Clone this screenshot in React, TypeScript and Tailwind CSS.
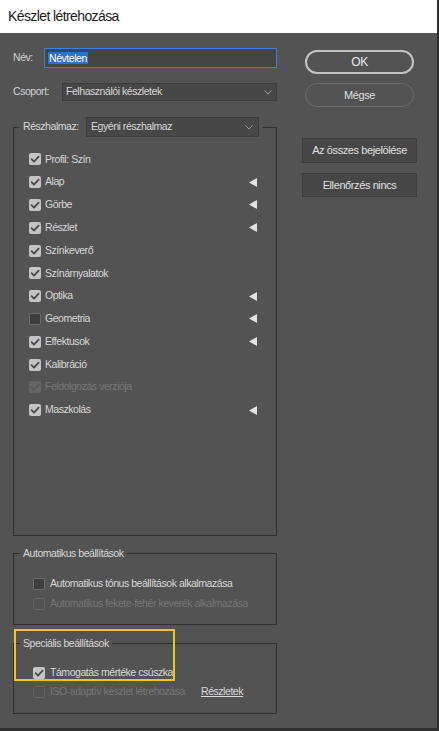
import React from "react";

type BoxProps = { checked?: boolean; disabled?: boolean };

function CheckBox({ checked, disabled }: BoxProps) {
  if (checked) {
    return (
      <span
        className={`flex h-[12px] w-[12px] shrink-0 items-center justify-center rounded-[2px] ${
          disabled ? "bg-[#666666]" : "bg-[#c4c4c4]"
        }`}
      >
        <svg viewBox="0 0 12 12" className="h-[12px] w-[12px]">
          <polyline
            points="2.6,6.2 5,8.6 9.6,3.6"
            fill="none"
            stroke={disabled ? "#585858" : "#4b4b4b"}
            strokeWidth="1.8"
            strokeLinecap="round"
            strokeLinejoin="round"
          />
        </svg>
      </span>
    );
  }
  return (
    <span
      className={`h-[12px] w-[12px] shrink-0 rounded-[2px] border ${
        disabled ? "border-[#646464] bg-transparent" : "border-[#6c6c6c] bg-[#3d3d3d]"
      }`}
    />
  );
}

function Arrow() {
  return (
    <svg viewBox="0 0 8 9" className="h-[9px] w-[8px]">
      <polygon points="8,0 8,9 0,4.5" fill="#e2e2e2" />
    </svg>
  );
}

function Chevron() {
  return (
    <svg viewBox="0 0 8 5" className="h-[5px] w-[8px]">
      <polyline points="0.5,0.5 4,4 7.5,0.5" fill="none" stroke="#9c9c9c" strokeWidth="1" />
    </svg>
  );
}

const subsetRows = [
  { label: "Profil: Szín", checked: true },
  { label: "Alap", checked: true, arrow: true },
  { label: "Görbe", checked: true, arrow: true },
  { label: "Részlet", checked: true, arrow: true },
  { label: "Színkeverő", checked: true },
  { label: "Színárnyalatok", checked: true },
  { label: "Optika", checked: true, arrow: true },
  { label: "Geometria", checked: false, arrow: true },
  { label: "Effektusok", checked: true, arrow: true },
  { label: "Kalibráció", checked: true },
  { label: "Feldolgozás verziója", checked: true, disabled: true },
  { label: "Maszkolás", checked: true, arrow: true },
];

export default function App() {
  return (
    <div className="flex h-[731px] w-[439px] flex-col overflow-hidden border-r-2 border-b-[3px] border-[#2f2f2f] bg-[#535353] font-['Liberation_Sans',Arial,sans-serif] text-[10.5px] tracking-[-0.45px] text-[#d8d8d8]">
      {/* Title bar */}
      <div className="flex h-[33px] shrink-0 items-center bg-white pl-[8px] text-[14px] tracking-[-0.6px] text-[#1b1b1b]">
        Készlet létrehozása
      </div>

      <div className="flex pl-[13px]">
        {/* Left column */}
        <div className="flex w-[264px] flex-col">
          <div className="mt-[15px] flex h-[20px] items-center">
            <span className="w-[31px] text-[#d2d2d2]">Név:</span>
            <div className="flex h-[20px] flex-1 items-center border border-[#3f7fd8] bg-[#444444] pl-[3px]">
              <span className="bg-[#2f6fd8] px-[1px] leading-[12px] text-white">Névtelen</span>
            </div>
          </div>

          <div className="mt-[15px] flex h-[18px] items-center">
            <span className="w-[49px] text-[#d2d2d2]">Csoport:</span>
            <div className="flex h-[18px] flex-1 items-center justify-between border border-[#3c3c3c] bg-[#474747] pl-[3px] pr-[4px]">
              <span>Felhasználói készletek</span>
              <Chevron />
            </div>
          </div>

          <fieldset className="mt-[16px] h-[419px] border border-[#2f2f2f]">
            <legend className="ml-[5px] flex items-center px-[4px]">
              <span className="w-[63px]">Részhalmaz:</span>
              <div className="flex h-[20px] w-[173px] items-center justify-between border border-[#3c3c3c] bg-[#474747] pl-[4px] pr-[5px]">
                <span>Egyéni részhalmaz</span>
                <Chevron />
              </div>
            </legend>
            <div className="flex flex-col pl-[15px] pr-[19px] pt-[11px]">
              {subsetRows.map((r) => (
                <div key={r.label} className="flex h-[22.8px] items-center">
                  <CheckBox checked={r.checked} disabled={r.disabled} />
                  <span className={`ml-[4px] flex-1 ${r.disabled ? "text-[#777777]" : ""}`}>{r.label}</span>
                  {r.arrow && <Arrow />}
                </div>
              ))}
            </div>
          </fieldset>

          <fieldset className="mt-[10px] h-[79px] border border-[#2f2f2f]">
            <legend className="ml-[6px] px-[3px] leading-[14px]">Automatikus beállítások</legend>
            <div className="flex flex-col pl-[19px] pt-[14px]">
              <div className="flex h-[20px] items-center">
                <CheckBox />
                <span className="ml-[5px]">Automatikus tónus beállítások alkalmazása</span>
              </div>
              <div className="flex h-[20px] items-center">
                <CheckBox disabled />
                <span className="ml-[5px] text-[#767676]">Automatikus fekete-fehér keverék alkalmazása</span>
              </div>
            </div>
          </fieldset>

          <div className="relative mt-[11px]">
            <fieldset className="h-[78px] border border-[#2f2f2f]">
              <legend className="ml-[6px] px-[3px] leading-[14px]">Speciális beállítások</legend>
              <div className="flex flex-col pl-[19px] pt-[13px]">
                <div className="flex h-[19px] items-center">
                  <CheckBox checked />
                  <span className="ml-[5px]">Támogatás mértéke csúszka</span>
                </div>
                <div className="flex h-[19px] items-center">
                  <CheckBox disabled />
                  <span className="ml-[5px] w-[151px] text-[#767676]">ISO-adaptív készlet létrehozása</span>
                  <span className="underline">Részletek</span>
                </div>
              </div>
            </fieldset>
            {/* highlight */}
            <div className="absolute left-[1px] top-[-7px] h-[52px] w-[161px] border-2 border-[#f0c514]" />
          </div>
        </div>

        {/* Right column */}
        <div className="ml-[25px] flex w-[115px] flex-col items-center text-[11px] tracking-[-0.4px]">
          <button className="mt-[17px] flex h-[24px] w-[109px] items-center justify-center rounded-full border-2 border-[#c4c4c4] text-[12px] text-[#e8e8e8]">
            OK
          </button>
          <button className="mt-[9px] flex h-[24px] w-[109px] items-center justify-center rounded-full border-[1.5px] border-[#6c6c6c] text-[#dedede]">
            Mégse
          </button>
          <button className="mt-[31px] flex h-[25px] w-[115px] items-center justify-center border border-[#3d3d3d] bg-[#474747] text-[#e0e0e0]">
            Az összes bejelölése
          </button>
          <button className="mt-[10px] flex h-[24px] w-[115px] items-center justify-center border border-[#3d3d3d] bg-[#474747] text-[#e0e0e0]">
            Ellenőrzés nincs
          </button>
        </div>
      </div>
    </div>
  );
}
